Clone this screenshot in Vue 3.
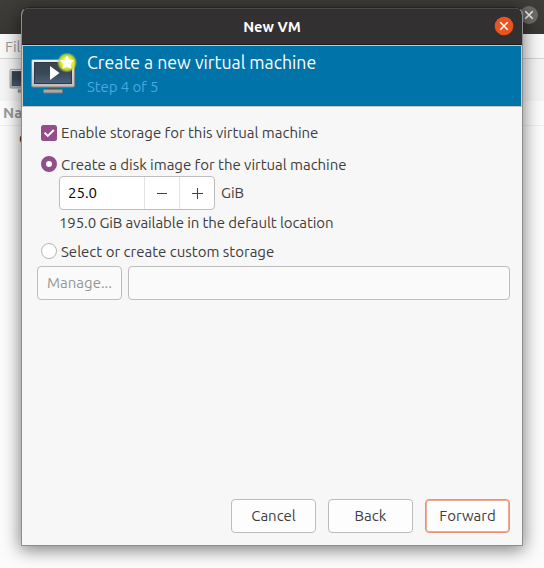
<script setup>
import { ref } from 'vue'
const storage = ref(true)
const mode = ref('image')
const size = ref(25)
</script>

<template>
  <div class="desktop">
    <section class="parent">
      <div class="parent-title">
        <svg class="parent-close" width="18" height="18" viewBox="0 0 18 18"><circle cx="9" cy="9" r="9" fill="#6b6b69" /><path d="M5.300 5.300l7.400 7.400M12.700 5.300l-7.400 7.400" stroke="#f4f4f4" stroke-width="1.600" /></svg>
      </div>
      <div class="menubar">File</div>
      <div class="toolbar">
        <svg width="44" height="44" viewBox="0 0 44 44"><use href="#monitor" transform="scale(.68)" /></svg>
      </div>
      <div class="list-head">Name</div>
      <div class="list-row">Q</div>
    </section>

    <section class="dialog">
      <header class="title">
        <span class="t-title">New VM</span>
        <svg class="close" width="20" height="20" viewBox="0 0 20 20"><circle cx="10" cy="10" r="9.300" fill="#e95420" /><path d="M6.300 6.300l7.400 7.400M13.700 6.300l-7.400 7.400" stroke="#fff" stroke-width="1.500" /></svg>
      </header>
      <div class="banner">
        <svg class="monitor" width="50" height="44" viewBox="0 0 50 44">
          <defs>
            <linearGradient id="frame" x2="0" y2="1"><stop stop-color="#eee" /><stop offset="1" stop-color="#bcbcba" /></linearGradient>
            <linearGradient id="screen" x2="0" y2="1"><stop stop-color="#38444f" /><stop offset=".5" stop-color="#3a4858" /><stop offset="1" stop-color="#4e6078" /></linearGradient>
            <radialGradient id="glow"><stop stop-color="#fffb80" /><stop offset=".5" stop-color="#f0f030" /><stop offset=".75" stop-color="#d3e02a" stop-opacity=".85" /><stop offset="1" stop-color="#a4d040" stop-opacity="0" /></radialGradient>
            <g id="monitor">
              <path d="M18 34h11v4H18z" fill="#555" />
              <path d="M13.500 36.500h19v3.500h-19z" fill="#aaa" stroke="#777" />
              <rect x="1.500" y="6.500" width="43" height="27.500" rx="1.500" fill="url(#frame)" stroke="#888" />
              <rect x="4.500" y="9.500" width="37" height="21" fill="url(#screen)" stroke="#303a45" />
              <path d="M20 13l9.500 7L20 27z" fill="#fff" />
              <circle cx="37" cy="9.500" r="10.300" fill="url(#glow)" />
              <path d="M37 3.200l2 3.900 4.300.6-3.100 3.100.8 4.400-4-2-4 2 .8-4.400-3.100-3.100 4.300-.6z" fill="#fff" stroke="#fff" stroke-width=".8" stroke-linejoin="round" />
            </g>
          </defs>
          <use href="#monitor" />
        </svg>
        <div class="heading">
          <span class="t-heading">Create a new virtual machine</span>
          <span class="t-step">Step 4 of 5</span>
        </div>
      </div>

      <main>
        <div class="choice check" @click="storage = !storage">
          <svg width="16" height="16" viewBox="0 0 16 16"><rect width="16" height="16" rx="2.500" fill="#924d8b" /><path v-if="storage" d="M3.500 7.700l3.300 3.300 6-6" fill="none" stroke="#fff" stroke-width="1.900" /></svg>
          <span class="t-enable">Enable storage for this virtual machine</span>
        </div>
        <div class="choice image" @click="mode = 'image'">
          <span class="radio" :class="{ on: mode === 'image' }"></span>
          <span class="label t-create">Create a disk image for the virtual machine</span>
        </div>
        <div class="size-row">
          <div class="spin">
            <span class="value">{{ size.toFixed(1) }}</span>
            <span class="step" @click="size--"><svg width="12" height="12"><path d="M1 6.500h10" stroke="#444" /></svg></span>
            <span class="step" @click="size++"><svg width="12" height="12"><path d="M1 6.500h11M6.500 1v11" stroke="#444" /></svg></span>
          </div>
          <span>GiB</span>
        </div>
        <div class="available">195.0 GiB available in the default location</div>
        <div class="choice custom" @click="mode = 'custom'">
          <span class="radio" :class="{ on: mode === 'custom' }"></span>
          <span class="label">Select or create custom storage</span>
        </div>
        <div class="path-row">
          <div class="btn disabled">Manage...</div>
          <div class="entry"></div>
        </div>
      </main>

      <footer>
        <div class="btn">Cancel</div>
        <div class="btn">Back</div>
        <div class="btn primary">Forward</div>
      </footer>
    </section>
  </div>
</template>

<style>
body { overflow: hidden; }
</style>

<style scoped>
* { box-sizing: border-box; }
.desktop { position: relative; width: 544px; height: 568px; overflow: hidden; background: #fcfcfc; font: 15px/20px Ubuntu, "Noto Sans", sans-serif; color: #3d3d3d; white-space: nowrap; }
svg { display: block; flex: none; }
.parent-title { height: 34px; background: linear-gradient(#3e3d39, #393835); display: flex; justify-content: flex-end; padding: 6px 6px 0 0; }
.menubar { height: 25px; padding: 3px 5px; background: #f9f9f9; border-bottom: 1px solid #d5d5d5; color: #999; }
.toolbar { height: 42px; padding: 6px 9px; background: #f5f5f5; }
.list-head { height: 25px; padding: 2px 3px; background: #fcfcfc; border-bottom: 1px solid #eee; color: #999; font-weight: 700; }
.list-row { height: 30px; padding: 3px 19px; color: #111; }
.dialog { position: absolute; left: 21px; top: 7px; width: 502px; height: 539px; display: flex; flex-direction: column; border: 1px solid #8d8d8d; border-top-color: #242323; border-radius: 8px 8px 0 0; background: #f7f7f7; box-shadow: 0 3px 17px 1px rgba(0,0,0,.5); overflow: hidden; }
.title { position: relative; flex: none; height: 37px; display: flex; justify-content: center; align-items: center; background: #333031; border-top: 1px solid #4a4848; border-bottom: 1px solid #1e1d1d; color: #fff; font-weight: 700; font-size: 14.670px; }
.close { position: absolute; right: 8px; top: 7px; }
.banner { flex: none; height: 62px; border: 1px solid #cbc6c1; background: #0073a9; display: flex; }
.monitor { margin: 7px 0 0 7px; }
.heading { display: flex; flex-direction: column; padding: 5px 0 0 7px; color: #fff; }
.t-heading { font-size: 17.700px; line-height: 24px; }
.t-step { color: #4ca7dc; line-height: 23px; letter-spacing: -.1px; }
main { flex: 1; padding: 18px 12px 0 15px; }
.choice { display: flex; align-items: center; gap: 4px; height: 16px; margin-left: 4px; }
.label { padding-top: 2px; }
.t-enable, .t-create { letter-spacing: -.03px; }
.image { margin-top: 15px; }
.radio { flex: none; width: 16px; height: 16px; border: 1px solid #b5b5b5; border-radius: 50%; background: #fff; }
.radio.on { border: 5px solid #924d8b; }
.size-row { display: flex; align-items: center; gap: 6px; margin: 4px 0 0 22px; }
.spin { display: flex; width: 156px; height: 34px; border: 1px solid #bdbdbd; border-radius: 4px; background: #fff; color: #000; }
.value { flex: 1; padding: 6px 8px; }
.step { width: 35px; border-left: 1px solid #e3e3e3; display: flex; justify-content: center; align-items: center; }
.available { height: 20px; margin: 3px 0 0 22px; letter-spacing: -.09px; }
.custom { margin-top: 10px; }
.path-row { display: flex; gap: 6px; margin-top: 7px; }
.btn { width: 85px; height: 34px; border: 1px solid #bdbdbd; border-radius: 4px; background: #fdfdfd; display: flex; justify-content: center; align-items: center; }
.disabled { background: #fafafa; color: #969696; }
.entry { flex: 1; border: 1px solid #bdbdbd; border-radius: 4px; background: #fafafa; }
footer { flex: none; display: flex; justify-content: flex-end; gap: 12px; padding: 0 12px 12px; }
.primary { border: 1px solid #e98f73; box-shadow: inset 0 0 0 1px #efab94; }
</style>
